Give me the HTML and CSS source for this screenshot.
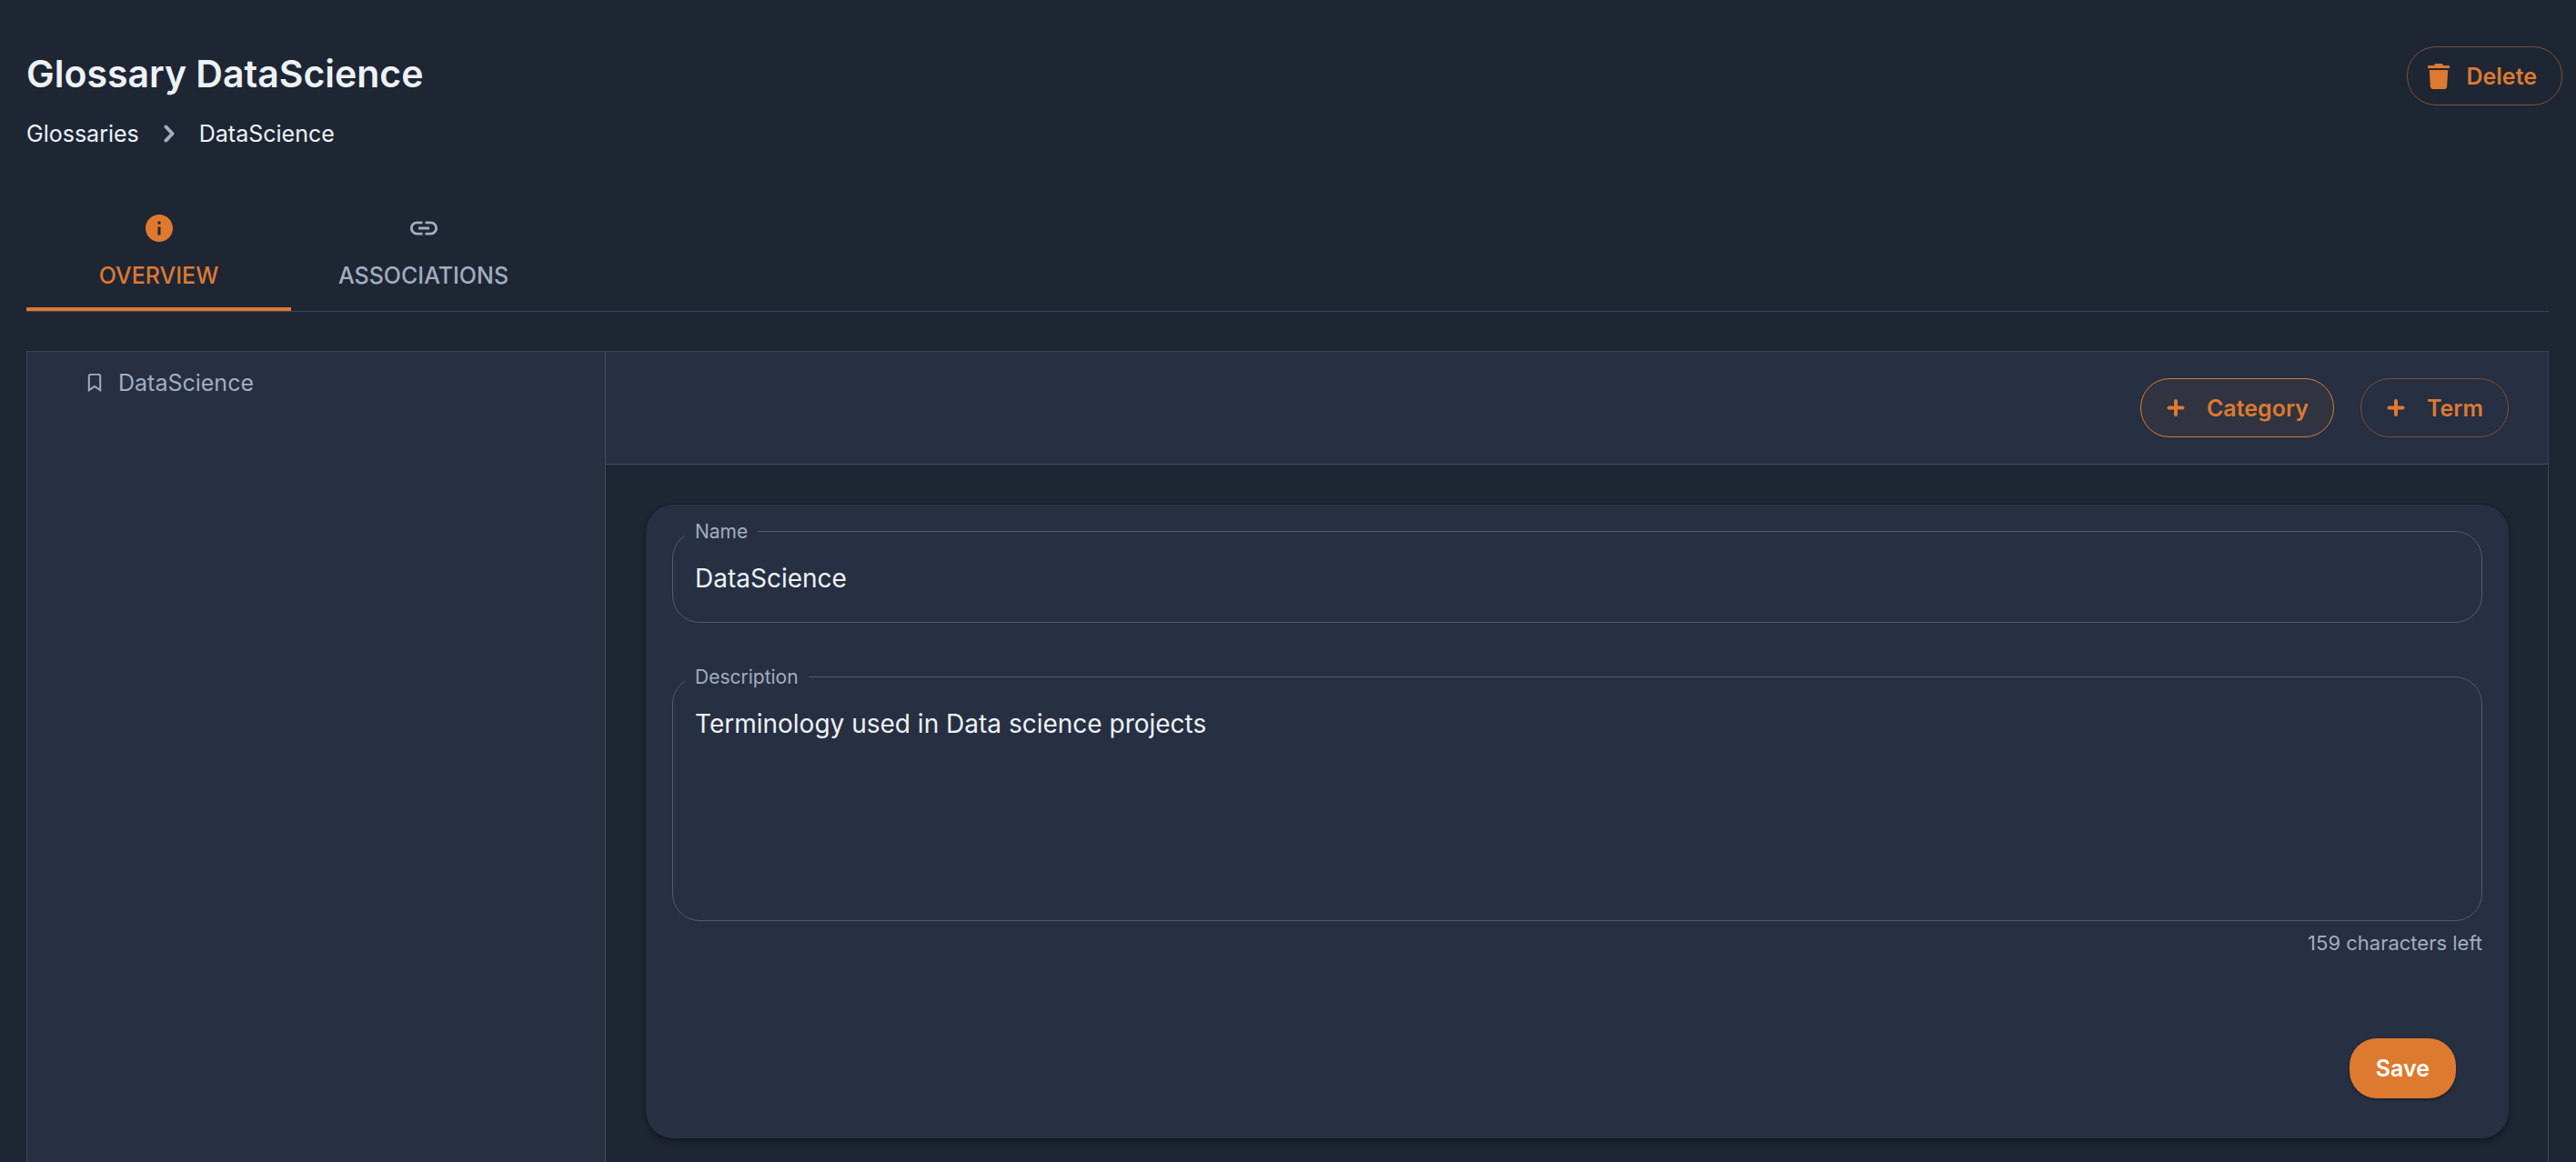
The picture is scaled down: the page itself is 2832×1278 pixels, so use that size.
FILE: index.html
```html
<!DOCTYPE html>
<html lang="en">
<head>
  <meta charset="UTF-8">
  <meta name="viewport" content="width=device-width, initial-scale=1.0">
  <title>Glossary DataScience</title>
  <link rel="stylesheet" href="styles.css">
</head>
<body>
  <header class="header">
    <div class="heading">
      <h1>Glossary DataScience</h1>
      <nav class="breadcrumbs">
        <a href="#">Glossaries</a>
        <svg class="chevron" viewBox="0 0 12 20"><path d="M2.5 2.5 9.5 10l-7 7.5"/></svg>
        <a href="#">DataScience</a>
      </nav>
    </div>
    <button type="button" class="btn">
      <svg class="icon-trash" viewBox="0 0 28 28"><path d="M2 2.8q0-.9.9-.9H9q.3-1.9 1.900-1.900h6.200Q18.700 0 19 1.900h6.100q.9 0 .9.900V5H2zM3.800 7h20.400l-1.100 18.600Q22.900 28 20.700 28H7.300Q5.100 28 4.900 25.600z"/></svg>
      Delete
    </button>
  </header>

  <nav class="tabs">
    <a class="tab active" href="#">
      <svg viewBox="0 0 24 24"><path d="M12 2C6.480 2 2 6.480 2 12s4.480 10 10 10 10-4.480 10-10S17.520 2 12 2zm1 15h-2v-6h2v6zm0-8h-2V7h2v2z"/></svg>
      OVERVIEW
    </a>
    <a class="tab" href="#">
      <svg viewBox="0 0 24 24"><path d="M3.900 12c0-1.710 1.390-3.100 3.100-3.100h4V7H7c-2.760 0-5 2.240-5 5s2.240 5 5 5h4v-1.900H7c-1.710 0-3.100-1.390-3.100-3.100zM8 13h8v-2H8v2zm9-6h-4v1.900h4c1.710 0 3.100 1.390 3.100 3.100s-1.390 3.100-3.100 3.100h-4V17h4c2.760 0 5-2.240 5-5s-2.240-5-5-5z"/></svg>
      ASSOCIATIONS
    </a>
  </nav>

  <main class="panel">
    <aside class="tree">
      <a class="tree-item" href="#">
        <svg viewBox="0 0 16 20"><path d="M1.800 18.200V3q0-2.200 2.200-2.200h8q2.200 0 2.200 2.200v15.200L8 14z"/></svg>
        DataScience
      </a>
    </aside>

    <section class="detail">
      <div class="toolbar">
        <button type="button" class="btn hovered">
          <svg class="icon-plus" viewBox="0 0 36 36"><path d="M18 10v15M10.500 17.500h15"/></svg>
          Category
        </button>
        <button type="button" class="btn">
          <svg class="icon-plus" viewBox="0 0 36 36"><path d="M18 10v15M10.500 17.500h15"/></svg>
          Term
        </button>
      </div>

      <div class="content">
        <form class="card">
          <div class="field">
            <label for="name">Name</label>
            <input type="text" id="name" value="DataScience">
          </div>
          <div class="field">
            <label for="description">Description</label>
            <textarea id="description">Terminology used in Data science projects</textarea>
          </div>
          <p class="helper">159 characters left</p>
          <div class="actions">
            <button type="submit" class="save">Save</button>
          </div>
        </form>
      </div>
    </section>
  </main>
</body>
</html>
```

FILE: styles.css
```css
* { box-sizing: border-box; }

body {
  display: flex;
  flex-direction: column;
  min-height: 100vh;
  margin: 0;
  background: #1e2634;
  color: #edf2f7;
  font-family: Inter, Roboto, "Liberation Sans", sans-serif;
  font-size: 25px;
}

a { color: inherit; text-decoration: none; }
button, input, textarea { font-family: inherit; }
svg { display: block; flex: none; fill: currentColor; }

/* header */
.header {
  display: flex;
  justify-content: space-between;
  align-items: flex-start;
  padding: 51px 15px 0 29px;
}
.heading { padding-top: 4px; }
h1 { margin: 0 0 22px; font-size: 41px; line-height: 52px; font-weight: 600; }
.breadcrumbs { display: flex; align-items: center; gap: 27px; line-height: 36px; }
.chevron { width: 12px; height: 20px; fill: none; stroke: #a0aec0; stroke-width: 4; stroke-linecap: round; stroke-linejoin: round; }

.btn {
  display: flex;
  align-items: center;
  gap: 16px;
  height: 65px;
  padding: 0 27px 0 20px;
  border: 1px solid #7f5034;
  border-radius: 32px;
  background: none;
  color: #de7930;
  font-size: 25px;
  font-weight: 600;
}
.btn.hovered { border-color: #de7930; background: #2f3440; }
.icon-trash { width: 28px; height: 28px; }
.icon-plus { width: 36px; height: 36px; stroke: currentColor; stroke-width: 4; stroke-linecap: round; }

/* tabs */
.tabs { display: flex; margin: 68px 30px 0 29px; border-bottom: 1px solid #394252; }
.tab {
  display: flex;
  flex-direction: column;
  align-items: center;
  gap: 16px;
  width: 291px;
  padding-bottom: 17px;
  border-bottom: 4px solid transparent;
  color: #a0aec0;
  line-height: 36px;
  font-weight: 500;
}
.tab.active { color: #de7930; border-color: #de7930; }
.tab svg { width: 36px; height: 36px; }

/* main panel */
.panel {
  display: flex;
  flex: 1;
  margin: 43px 30px 0 29px;
  border: 1px solid #3a4453;
  border-bottom: 0;
}
.tree { flex: none; width: 636px; padding: 16px 0 0 66px; border-right: 1px solid #3f4a5b; background: #272f42; }
.tree-item { display: flex; align-items: center; gap: 18px; color: #a0aec0; line-height: 36px; }
.tree-item svg { width: 16px; height: 20px; fill: none; stroke: currentColor; stroke-width: 2; }

.detail { flex: 1; }
.toolbar {
  display: flex;
  justify-content: flex-end;
  gap: 29px;
  padding: 29px 43px 29px 0;
  border-bottom: 1px solid #3f4a5b;
  background: #272f42;
}
.content { padding: 44px 43px 26px 44px; }

.card {
  padding: 29px 29px 44px;
  border-radius: 30px;
  background: #272f42;
  box-shadow: 0 0 2px rgba(0, 0, 0, 0.5), 0 4px 6px rgba(0, 0, 0, 0.3);
}
.field { position: relative; }
.field + .field { margin-top: 59px; }
.field label {
  position: absolute;
  top: -14px;
  left: 14px;
  padding: 0 11px;
  background: #272f42;
  color: #a0aec0;
  font-size: 21px;
  line-height: 30px;
}
.field input, .field textarea {
  display: block;
  width: 100%;
  padding: 0 24px;
  border: 1px solid #545c6c;
  border-radius: 30px;
  background: none;
  color: #edf2f7;
  font-size: 28px;
  line-height: 40px;
}
.field input { height: 101px; padding-top: 2px; }
.field textarea { height: 269px; padding-top: 31px; resize: none; }
.helper { margin: 9px 0 90px; color: #a0aec0; font-size: 22px; line-height: 30px; text-align: right; }

.actions { display: flex; justify-content: flex-end; padding-right: 29px; }
.save {
  height: 66px;
  padding: 0 29px;
  border: 0;
  border-radius: 30px;
  background: #de7930;
  color: #fff;
  font-size: 25px;
  font-weight: 600;
  box-shadow: 0 1px 3px rgba(0, 0, 0, 0.5);
}
```
